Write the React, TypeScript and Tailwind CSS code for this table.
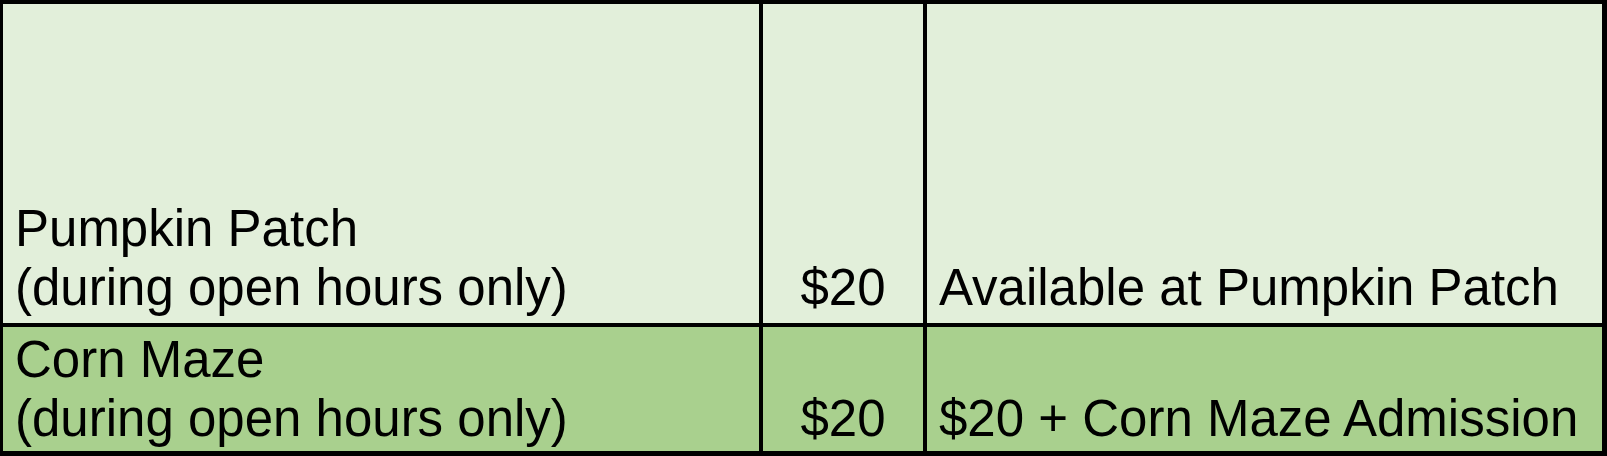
import React from 'react';

const rows = [
  {
    name: 'Pumpkin Patch',
    note: '(during open hours only)',
    price: '$20',
    where: 'Available at Pumpkin Patch',
    bg: 'bg-[#e2efda]',
    pad: 'pb-[6px]',
  },
  {
    name: 'Corn Maze',
    note: '(during open hours only)',
    price: '$20',
    where: '$20 + Corn Maze Admission',
    bg: 'bg-[#a9d08e]',
    pad: 'pb-[3px]',
  },
];

export default function App() {
  return (
    <div
      className="w-[1607px] h-[456px] bg-black pt-[4px] pl-[3px] pr-[5px] pb-[5px] grid grid-cols-[756px_160px_675px] grid-rows-[319px_124px] gap-[4px] text-[51px] leading-[59px] text-black"
      style={{ fontFamily: '"Liberation Sans", Arial, sans-serif' }}
    >
      {rows.map((row) => (
        <React.Fragment key={row.name}>
          <div className={`${row.bg} ${row.pad} pl-[12px] flex flex-col justify-end`}>
            <div>{row.name}</div>
            <div>{row.note}</div>
          </div>
          <div className={`${row.bg} ${row.pad} flex items-end justify-center`}>
            <div>{row.price}</div>
          </div>
          <div className={`${row.bg} ${row.pad} pl-[12px] flex items-end`}>
            <div>{row.where}</div>
          </div>
        </React.Fragment>
      ))}
    </div>
  );
}
